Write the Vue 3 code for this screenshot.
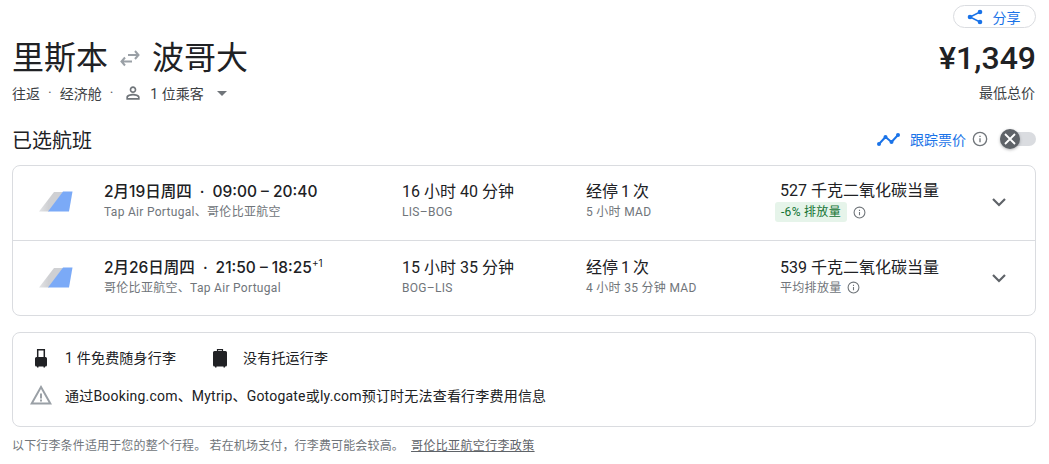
<script setup>
const flights = [
  { date: '2月19日周四', time: '09:00 – 20:40', plus: '', air: 'Tap Air Portugal、哥伦比亚航空', dur: '16 小时 40 分钟', route: 'LIS–BOG', stops: '经停 1 次', via: '5 小时 MAD', co2: '527 千克二氧化碳当量', badge: '-6% 排放量', note: '' },
  { date: '2月26日周四', time: '21:50 – 18:25', plus: '+1', air: '哥伦比亚航空、Tap Air Portugal', dur: '15 小时 35 分钟', route: 'BOG–LIS', stops: '经停 1 次', via: '4 小时 35 分钟 MAD', co2: '539 千克二氧化碳当量', badge: '', note: '平均排放量' }
]
</script>

<template>
  <main class="page">
    <div class="share-row">
      <button class="share">
        <svg width="16" height="16" viewBox="0 0 16 16"><g fill="#1a73e8"><circle cx="13" cy="3" r="2.300"/><circle cx="3" cy="8" r="2.300"/><circle cx="13" cy="13" r="2.300"/></g><path fill="none" stroke="#1a73e8" stroke-width="1.400" d="M13 3 3 8l10 5"/></svg>
        <span>分享</span>
      </button>
    </div>
    <header class="head">
      <div>
        <h1 class="title">
          <span>里斯本</span>
          <svg class="swap" width="20" height="20" viewBox="0 0 20 20"><path fill="none" stroke="#9aa0a6" stroke-width="2" d="M1 13.500h11M5 9.500l-3.500 4 3.500 4M19 7H8M15 3l3.500 4L15 11"/></svg>
          <span>波哥大</span>
        </h1>
        <div class="meta">
          <span>往返</span><i>·</i><span>经济舱</span><i>·</i>
          <svg class="person" width="20" height="20" viewBox="0 0 24 24"><path fill="#70757a" d="M12 6c1.100 0 2 .9 2 2s-.9 2-2 2-2-.9-2-2 .9-2 2-2m0 9c2.700 0 5.800 1.300 6 2v1H6v-1c.2-.7 3.300-2 6-2m0-11C9.800 4 8 5.800 8 8s1.800 4 4 4 4-1.800 4-4-1.800-4-4-4zm0 9c-2.700 0-8 1.300-8 4v3h16v-3c0-2.700-5.300-4-8-4z"/></svg>
          <span class="pax">1 位乘客</span>
          <span class="caret"></span>
        </div>
      </div>
      <div class="price">
        <strong>¥1,349</strong>
        <span>最低总价</span>
      </div>
    </header>

    <section class="selected">
      <h2>已选航班</h2>
      <div class="track">
        <svg width="24" height="16" viewBox="0 0 24 16"><path fill="none" stroke="#1a73e8" stroke-width="2" stroke-linejoin="round" d="M3 13l6.500-7 6 5L22 4"/><g fill="#1a73e8"><circle cx="3" cy="13" r="2"/><circle cx="9.500" cy="6" r="2"/><circle cx="15.500" cy="11" r="2"/><circle cx="22" cy="4" r="2"/></g></svg>
        <span class="track-label">跟踪票价</span>
        <svg class="info" width="16" height="16" viewBox="0 0 24 24"><circle cx="12" cy="12" r="10" fill="none" stroke="#70757a" stroke-width="2"/><path fill="#70757a" d="M11 11h2v6h-2zM11 7h2v2h-2z"/></svg>
        <div class="toggle">
          <span class="knob"><svg width="14" height="14" viewBox="0 0 14 14"><path stroke="#fff" stroke-width="1.800" d="M2 2l10 10M12 2L2 12"/></svg></span>
        </div>
      </div>
    </section>

    <section class="card flights">
      <article v-for="f in flights" :key="f.date" class="flight">
        <svg class="logo" width="36" height="24" viewBox="0 0 36 24">
          <defs>
            <linearGradient id="fade" x1="0" x2="1" y1="0" y2="0"><stop offset="0" stop-color="#e3e4e6"/><stop offset=".4" stop-color="#cfd0d3"/></linearGradient>
          </defs>
          <path fill="url(#fade)" d="M1 21.500 16 2h9L11 21.500z"/>
          <path fill="#7baaf7" d="M10 21.500 25 1.500h9.500L31 21.500z"/>
        </svg>
        <div class="col-main">
          <div class="big strong"><span>{{ f.date }}</span><span class="dot">·</span><span>{{ f.time }}</span><sup v-if="f.plus">{{ f.plus }}</sup></div>
          <div class="small">{{ f.air }}</div>
        </div>
        <div class="col-dur">
          <div class="big">{{ f.dur }}</div>
          <div class="small">{{ f.route }}</div>
        </div>
        <div class="col-stop">
          <div class="big">{{ f.stops }}</div>
          <div class="small">{{ f.via }}</div>
        </div>
        <div class="col-co2">
          <div class="big">{{ f.co2 }}</div>
          <div class="small co2-line">
            <span v-if="f.badge" class="badge">{{ f.badge }}</span>
            <span v-else>{{ f.note }}</span>
            <svg width="13" height="13" viewBox="0 0 24 24"><circle cx="12" cy="12" r="10" fill="none" stroke="#70757a" stroke-width="2"/><path fill="#70757a" d="M11 11h2v6h-2zM11 7h2v2h-2z"/></svg>
          </div>
        </div>
        <svg class="chev" width="24" height="24" viewBox="0 0 24 24"><path fill="none" stroke="#5f6368" stroke-width="2.200" d="M6 9l6 6 6-6"/></svg>
      </article>
    </section>

    <section class="card bags">
      <div class="bag-row">
        <div class="bag">
          <svg width="20" height="22" viewBox="0 0 20 22"><path fill="none" stroke="#202124" stroke-width="1.500" d="M7.700 11V3.800h6.600V11"/><path fill="#202124" d="M6.500 11h9A1.500 1.500 0 0 1 17 12.500V19a1.500 1.500 0 0 1-1.500 1.500H15V21.500h-1.500v-1h-5v1H7v-1h-.5A1.500 1.500 0 0 1 5 19v-6.500A1.500 1.500 0 0 1 6.500 11z"/></svg>
          <span>1 件免费随身行李</span>
        </div>
        <div class="bag">
          <svg width="20" height="22" viewBox="0 0 20 22"><path fill="none" stroke="#202124" stroke-width="1.200" d="M9.500 6V3.600h5V6"/><path fill="#202124" d="M6.500 5h11A1.500 1.500 0 0 1 19 6.500V19a1.500 1.500 0 0 1-1.500 1.500H17V21.500h-1.500v-1h-7v1H7v-1h-.5A1.500 1.500 0 0 1 5 19V6.500A1.500 1.500 0 0 1 6.500 5z"/></svg>
          <span>没有托运行李</span>
        </div>
      </div>
      <div class="warn">
        <svg width="24" height="22" viewBox="0 0 24 22"><path fill="#9aa0a6" d="M12 1 1 20.500h22zm0 4 7.600 13.500H4.400zM11 9.500v5h2v-5zm0 6v2h2v-2z"/></svg>
        <span>通过Booking.com、Mytrip、Gotogate或ly.com预订时无法查看行李费用信息</span>
      </div>
    </section>

    <p class="foot">以下行李条件适用于您的整个行程。 若在机场支付，行李费可能会较高。 <a>哥伦比亚航空行李政策</a></p>
  </main>
</template>

<style scoped>
.page { width: 1049px; height: 464px; overflow: hidden; box-sizing: border-box; padding: 5px 13px 0 12px; font-family: Roboto, "Noto Sans CJK SC", sans-serif; color: #202124; }
.share-row { display: flex; justify-content: flex-end; }
.share { display: flex; align-items: center; justify-content: center; gap: 10px; width: 83px; height: 23px; padding: 0 2px 0 0; border: 1px solid #dadce0; border-radius: 12px; background: #fff; color: #1a73e8; font: 14px Roboto, "Noto Sans CJK SC", sans-serif; }
.head { display: flex; justify-content: space-between; margin-top: 7px; }
.title { display: flex; align-items: center; margin: 0; font-size: 32px; font-weight: 400; line-height: 46px; height: 46px; }
.swap { margin: 0 12px; }
.meta { display: flex; align-items: center; margin-top: 2px; height: 20px; font-size: 14px; color: #3c4043; }
.meta i { font-style: normal; margin: 0 8px; color: #5f6368; }
.person { margin: 0 7px 0 2px; }
.pax { color: #3c4043; }
.caret { width: 0; height: 0; margin-left: 13px; border: 5px solid transparent; border-top-color: #70757a; border-bottom-width: 0; }
.price { display: flex; flex-direction: column; align-items: flex-end; }
.price strong { font-size: 32px; line-height: 46px; height: 46px; font-weight: 500; }
.price span { margin-top: 2px; margin-right: 1px; font-size: 14px; line-height: 20px; color: #3c4043; }
.selected { display: flex; justify-content: space-between; align-items: center; margin-top: 22px; height: 28px; }
.selected h2 { margin: 0; font-size: 20px; font-weight: 400; }
.track { display: flex; align-items: center; }
.track-label { margin-left: 10px; font-size: 14px; color: #1a73e8; }
.info { margin-left: 6px; }
.toggle { position: relative; width: 36px; height: 14px; margin-left: 12px; border-radius: 7px; background: #dadce0; }
.knob { position: absolute; left: 0; top: -3px; width: 20px; height: 20px; display: flex; align-items: center; justify-content: center; border-radius: 50%; background: #5f6368; box-shadow: 0 1px 3px rgba(60,64,67,.4); }
.card { box-sizing: border-box; border: 1px solid #dadce0; border-radius: 8px; background: #fff; }
.flights { margin-top: 12px; height: 151px; }
.flight { display: grid; grid-template-columns: 91px 298px 184px 194px 1fr 72px; align-items: center; height: 74px; }
.flight + .flight { border-top: 1px solid #dadce0; height: 73px; padding-top: 1px; }
.logo { margin-left: 25px; margin-top: -2px; }
.big { font-size: 16px; line-height: 23px; color: #202124; white-space: nowrap; }
.strong { font-family: Inter, "Noto Sans CJK SC", sans-serif; font-size: 15.500px; font-weight: 500; }
.dot { margin: 0 8px; }
sup { font-size: 10px; line-height: 0; font-weight: 400; vertical-align: 6px; }
.small { font-size: 12px; line-height: 18px; letter-spacing: .3px; color: #70757a; white-space: nowrap; }
.col-main, .col-dur, .col-stop, .col-co2 { margin-top: -5px; }
.col-stop .big { word-spacing: -1px; }
.co2-line { display: flex; align-items: center; gap: 5px; }
.badge { padding: 0 6px; margin: 0 1px 0 -5px; height: 20px; line-height: 20px; border-radius: 3px; background: #e6f4ea; color: #137333; }
.chev { justify-self: center; margin-top: -2px; }
.bags { margin-top: 16px; height: 95px; padding: 9px 0 0 17px; font-size: 14px; letter-spacing: .2px; color: #3c4043; }
.bag-row { display: flex; height: 30px; align-items: center; }
.bag { display: flex; flex: none; align-items: center; gap: 15px; width: 178px; white-space: nowrap; }
.bag svg { flex: none; }
.bag span { color: #202124; }
.warn { display: flex; align-items: center; gap: 12px; margin-top: 8px; height: 30px; margin-left: -1px; white-space: nowrap; color: #202124; }
.foot { margin: 10px 0 0; font-size: 12px; line-height: 18px; letter-spacing: .15px; color: #70757a; white-space: nowrap; }
.foot a { margin-left: 4px; letter-spacing: .35px; color: #5f6368; text-decoration: underline; }
</style>
